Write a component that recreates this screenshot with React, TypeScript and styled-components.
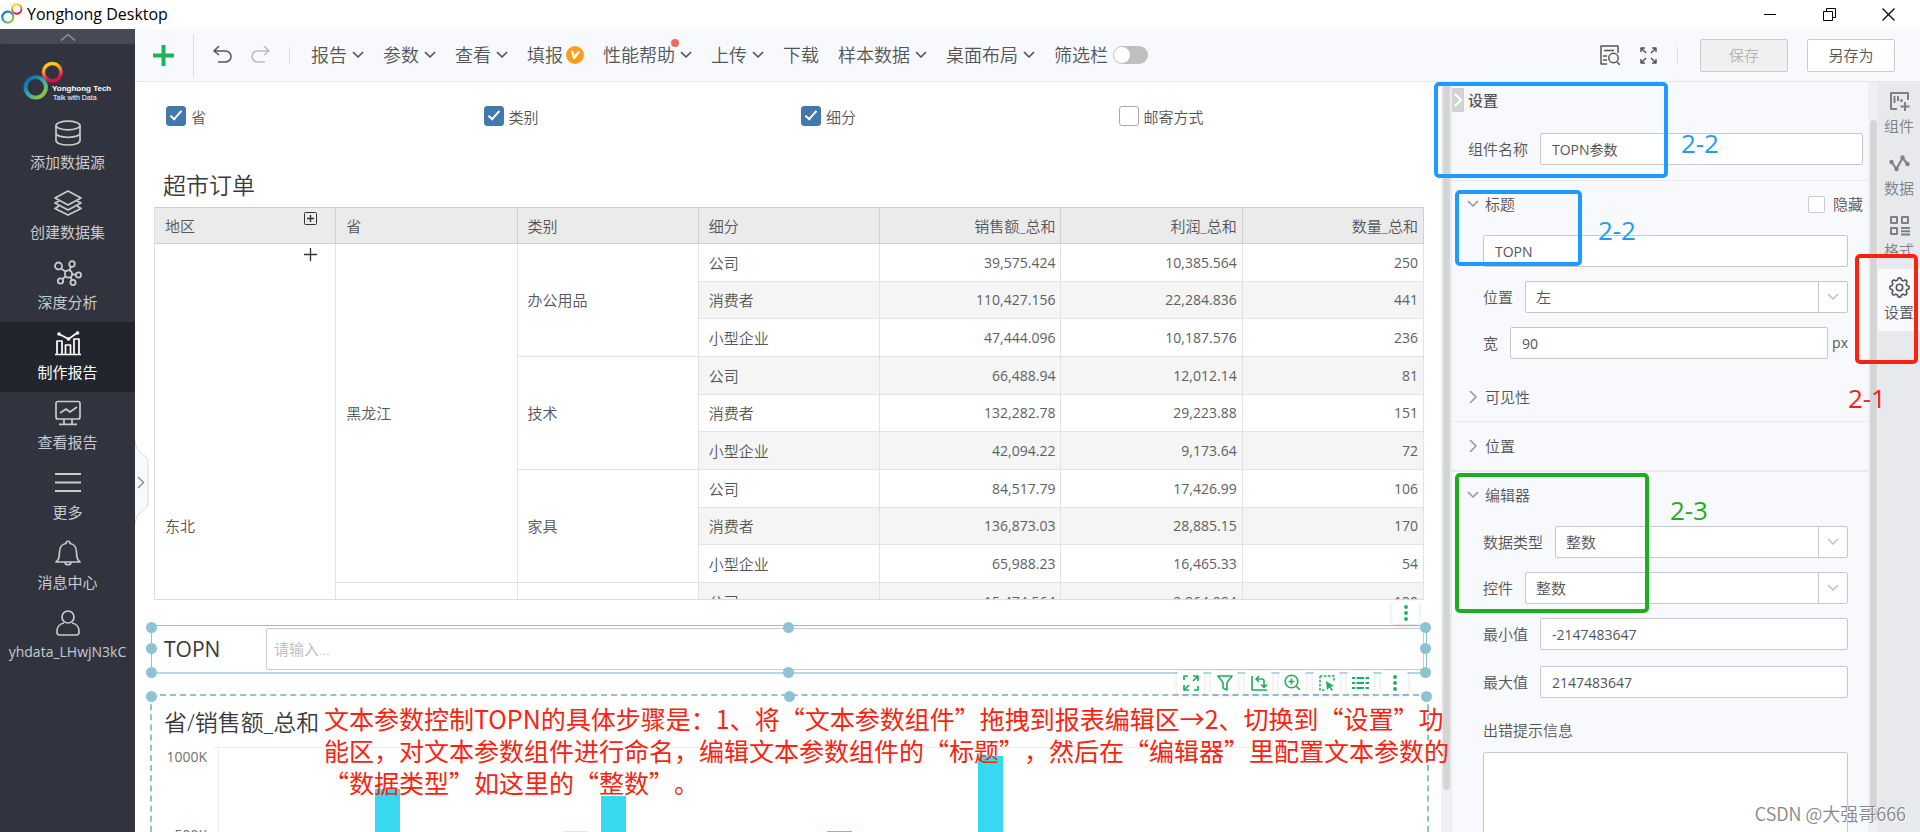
import React from "react";
import styled, { createGlobalStyle, css } from "styled-components";

const latin = `"Open Sans", "Noto Sans CJK SC", sans-serif`;
const cjk = `"Noto Sans CJK SC", sans-serif`;

const GlobalStyle = createGlobalStyle`
  *, *::before, *::after { box-sizing: border-box; }
  body { margin: 0; background: #fff; color: #555; font: 350 15px/20px ${latin}; }
  button, input, select, textarea { font: inherit; color: inherit; margin: 0; }
  button { padding: 0; border: 0; background: none; }
  svg { display: block; flex: none; }
`;

/* ---------- shell ---------- */

const Shell = styled.div`
  position: relative;
  display: flex;
  flex-direction: column;
  height: 100vh;
  overflow: hidden;
`;

const TitleBar = styled.header`
  display: flex;
  align-items: center;
  flex: none;
  height: 29px;
  padding: 0 25px 1px 1px;
  gap: 4px;
  color: #000;
  font-size: 16px;
  font-weight: 400;
`;

const AppName = styled.span`
  flex: 1;
`;

const WindowButtons = styled.div`
  display: flex;
  gap: 46px;
`;

const Body = styled.div`
  display: flex;
  flex: 1;
  min-height: 0;
`;

const Main = styled.div`
  display: flex;
  flex-direction: column;
  flex: 1;
  min-width: 0;
`;

/* ---------- sidebar ---------- */

const Sidebar = styled.nav`
  flex: none;
  width: 135px;
  background: #31343f;
  color: #c8cacd;
`;

const SidebarCollapse = styled.button`
  display: flex;
  align-items: center;
  justify-content: center;
  width: 100%;
  height: 15px;
  background: #474a55;
  border-radius: 0 0 3px 3px;
  color: #8d9098;
`;

const Brand = styled.div`
  display: flex;
  height: 68px;
  padding: 17px 0 0 23px;
  color: #fff;
`;

const BrandText = styled.div`
  margin: 23px 0 0 -12px;
  font: 700 8px/10px "Liberation Sans", Arial, sans-serif;
  white-space: nowrap;

  small {
    display: block;
    font: 400 7px/8px "Liberation Sans", Arial, sans-serif;
    padding-left: 1px;
  }
`;

const NavItem = styled.button<{ $active?: boolean }>`
  display: flex;
  flex-direction: column;
  align-items: center;
  width: 100%;
  height: 70px;
  padding-top: 8px;
  gap: 6px;
  font-size: 15px;
  font-weight: 400;
  ${(p) => p.$active && css`
    background: #22252e;
    color: #fff;
  `}
`;

const NavLabel = styled.span<{ $latin?: boolean }>`
  line-height: 20px;
  font-size: ${(p) => (p.$latin ? "14px" : "15px")};
`;

/* ---------- toolbar ---------- */

const Toolbar = styled.div`
  display: flex;
  align-items: center;
  flex: none;
  height: 53px;
  padding: 0 25px 0 18px;
  background: #f8f9fc;
  border-bottom: 1px solid #e4e7ee;
  color: #555;
`;

const ToolButton = styled.button<{ $gap?: number }>`
  position: relative;
  display: flex;
  align-items: center;
  margin-right: ${(p) => p.$gap ?? 19}px;
  gap: 5px;
  font-size: 18px;
  line-height: 24px;
  white-space: nowrap;
`;

const Rule = styled.span<{ $height: number; $gap: number }>`
  width: 1px;
  height: ${(p) => p.$height}px;
  margin-right: ${(p) => p.$gap}px;
  background: #d9dbe0;
`;

const Vip = styled.span`
  display: flex;
  align-items: center;
  justify-content: center;
  width: 18px;
  height: 18px;
  margin-left: -2px;
  border-radius: 50%;
  background: #fc9d1b;
  color: #fff;
`;

const NewDot = styled.i`
  position: absolute;
  top: -4px;
  right: 13px;
  width: 8px;
  height: 8px;
  border-radius: 50%;
  background: #f06a5c;
`;

const SwitchLabel = styled.label`
  display: flex;
  align-items: center;
  gap: 5px;
  font-size: 18px;
  line-height: 24px;
`;

const Switch = styled.input`
  appearance: none;
  width: 35px;
  height: 18px;
  border-radius: 9px;
  background: #bfbfbf;

  &::before {
    content: "";
    display: block;
    width: 16px;
    height: 16px;
    margin: 1px;
    border-radius: 50%;
    background: #fff;
  }
`;

const Spacer = styled.span`
  flex: 1;
`;

const FileButton = styled.button<{ $off?: boolean }>`
  width: 88px;
  height: 33px;
  border: 1px solid #ccc;
  border-radius: 2px;
  background: ${(p) => (p.$off ? "#f0f0f0" : "#fff")};
  color: ${(p) => (p.$off ? "#b5b5b5" : "#555")};
  & + & { margin-left: 19px; }
`;

/* ---------- report canvas ---------- */

const Workspace = styled.div`
  position: relative;
  display: flex;
  flex: 1;
  min-height: 0;
`;

const Canvas = styled.main`
  position: relative;
  display: flex;
  flex-direction: column;
  flex: 1;
  min-width: 0;
  padding: 24px 17px 0 19px;
`;

const DrawerHandle = styled.button`
  position: absolute;
  left: 0;
  top: 358px;
`;

const Filters = styled.div`
  display: grid;
  grid-template-columns: repeat(4, 1fr);
  padding-left: 12px;
  margin-right: -12px;
`;

const FilterLabel = styled.label`
  display: flex;
  gap: 5px;
  height: 20px;
  line-height: 23px;
`;

const FilterBox = styled.input`
  appearance: none;
  width: 20px;
  height: 20px;
  border: 1px solid #aaa;
  border-radius: 3px;
  background: #fff;

  &:checked {
    border-color: #4378ad;
    background: #4378ad;
  }
  &:checked::before {
    content: "";
    display: block;
    width: 6px;
    height: 12px;
    margin: 1px 0 0 6px;
    border: solid #fff;
    border-width: 0 2px 2px 0;
    transform: rotate(42deg);
  }
`;

const BlockTitle = styled.h2`
  margin: 0;
  color: #3a3a3a;
  font-size: 23px;
  font-weight: 350;
  line-height: 30px;
`;

const TableTitle = styled(BlockTitle)`
  padding: 44px 0 7px 9px;
`;

const TableScroll = styled.div`
  flex: none;
  height: 393px;
  overflow: hidden;
  border-bottom: 1px solid #ddd;
`;

const Grid = styled.table`
  width: 100%;
  table-layout: fixed;
  border-collapse: separate;
  border-spacing: 0;
  border: solid;
  border-width: 1px 0 0 1px;
  border-color: #d0d0d0 #ddd;

  tbody tr { height: 38px; }
  tbody tr:nth-child(3n + 2) { height: 37px; }
  tbody tr:nth-child(even) td:not([rowspan]) { background: #f5f5f5; }
  tbody tr:last-child { height: 188px; }
`;

const Th = styled.th<{ $num?: boolean }>`
  position: relative;
  height: 36px;
  padding: 0 5px 0 10px;
  border: 1px solid #d0d0d0;
  border-width: 0 1px 1px 0;
  background: #ebebeb;
  font-weight: 350;
  text-align: ${(p) => (p.$num ? "right" : "left")};
`;

const Td = styled.td<{ $num?: boolean }>`
  position: relative;
  padding: 0 5px 0 10px;
  border: 1px solid #e2e2e2;
  border-width: 0 1px 1px 0;
  ${(p) => p.$num && css`
    text-align: right;
    font-size: 14px;
    font-weight: 400;
    color: #606060;
  `}
`;

const ExpandButton = styled.button`
  position: absolute;
  top: 4px;
  right: 18px;
  color: #333;
`;

const ParamBlock = styled.section`
  position: relative;
  display: flex;
  align-items: center;
  flex: none;
  height: 49px;
  margin: 25px -3px 0;
  padding: 0 2px 1px 12px;
  border: 1px solid #8cc4d4;
  border-bottom: 2px solid #b5d8e2;
`;

const ParamLabel = styled.label`
  width: 102px;
  color: #3a3a3a;
  font-size: 21px;
  font-weight: 400;
  line-height: 30px;
`;

const ParamInput = styled.input`
  flex: 1;
  height: 42px;
  padding: 0 7px;
  border: 1px solid #ccc;
  border-radius: 2px;
  &::placeholder { color: #bbb; opacity: 1; }
`;

const Handle = styled.i<{ $x: string; $y: string }>`
  position: absolute;
  left: ${(p) => p.$x};
  top: ${(p) => p.$y};
  width: 11px;
  height: 11px;
  margin: -5px -6px;
  border-radius: 50%;
  background: #8cc4d4;
`;

const FloatingTools = styled.div<{ $right: number; $top: number }>`
  position: absolute;
  z-index: 1;
  top: ${(p) => p.$top}px;
  right: ${(p) => p.$right}px;
  display: flex;
  gap: 7px;
`;

const FloatButton = styled.button`
  display: flex;
  align-items: center;
  justify-content: center;
  width: 27px;
  height: 23px;
  border-radius: 4px;
  background: #fff;
  box-shadow: 0 1px 4px rgba(0, 0, 0, 0.14);
  color: #1fae5e;
`;

const ChartBlock = styled.section`
  position: relative;
  flex: 1;
  min-height: 0;
  margin: 20px -5px 0 -4px;
  padding: 11px 0 0 12px;
  border: 2px dashed #8cc4d4;
  border-bottom: 0;
`;

const Plot = styled.div`
  display: flex;
  margin-top: 10px;
`;

const AxisLabels = styled.div`
  display: flex;
  flex-direction: column;
  gap: 58px;
  width: 43px;
  font-size: 14px;
  font-weight: 400;
  color: #707070;
  text-align: right;
`;

const Bars = styled.svg`
  flex: 1;
  min-width: 0;
  height: 140px;
  margin: 0 2px 0 7px;
`;

const ScrollTrack = styled.div<{ $from: number; $bottom: number }>`
  flex: none;
  width: 10px;
  padding: ${(p) => p.$from}px 1px ${(p) => p.$bottom}px 2px;
  background: #eff0f4;

  &::before {
    content: "";
    display: block;
    height: 100%;
    border-radius: 4px;
    background: #d5d5d5;
  }
`;

/* ---------- settings panel ---------- */

const Panel = styled.aside`
  position: relative;
  flex: none;
  width: 417px;
  overflow: hidden;
  border-left: 1px solid #e4e7ee;
  background: #f8f9fc;
`;

const PanelCollapse = styled.button`
  position: absolute;
  left: 0;
  top: 6px;
  display: flex;
  align-items: center;
  justify-content: center;
  width: 12px;
  height: 24px;
  background: #d2d2d2;
  color: #fff;
`;

const PanelTitle = styled.h2`
  margin: 0;
  padding-left: 16px;
  font-size: 15px;
  font-weight: 500;
  line-height: 36px;
`;

const Field = styled.div`
  display: flex;
  align-items: center;
  height: 32px;
  gap: 12px;
`;

const NameField = styled(Field)`
  margin: 15px 5px 15px 16px;
`;

const Section = styled.section<{ $line?: number; $pad?: boolean }>`
  border-top: ${(p) => p.$line ?? 1}px solid #e6e9f2;
  padding-bottom: ${(p) => (p.$pad ? 14 : 0)}px;
`;

const SectionHead = styled.div<{ $open?: boolean }>`
  display: flex;
  align-items: center;
  justify-content: space-between;
  height: ${(p) => (p.$open ? 46 : 48)}px;
  padding: 0 5px 0 15px;
`;

const SectionToggle = styled.button`
  display: flex;
  align-items: center;
  gap: 6px;
  svg { color: #999; }
`;

const HideLabel = styled.label`
  display: flex;
  align-items: center;
  gap: 8px;
`;

const HideBox = styled.input`
  appearance: none;
  width: 17px;
  height: 17px;
  border: 1px solid #ccc;
  border-radius: 2px;
  background: #fff;
`;

const Fields = styled.div<{ $gap: number; $top: number }>`
  display: flex;
  flex-direction: column;
  gap: ${(p) => p.$gap}px;
  padding: ${(p) => p.$top}px 20px 0 31px;
`;

const TextInput = styled.input`
  flex: 1;
  min-width: 0;
  height: 32px;
  padding: 0 11px;
  border: 1px solid #c8c8c8;
  border-radius: 2px;
  background: #fff;
  font-size: 14px;
  font-weight: 400;
`;

const SelectWrap = styled.span`
  display: flex;
  flex: 1;
  height: 32px;
  border: 1px solid #c8c8c8;
  border-radius: 2px;
  background: #fff;
`;

const Select = styled.select`
  appearance: none;
  flex: 1;
  padding: 0 10px;
  border: 0;
  background: none;
`;

const SelectArrow = styled.span`
  display: flex;
  align-items: center;
  justify-content: center;
  width: 29px;
  border-left: 1px solid #c8c8c8;
  color: #c4c4c4;
`;

const Unit = styled.span`
  margin-left: -8px;
  font-size: 14px;
  font-weight: 400;
`;

const ErrorField = styled.div`
  display: flex;
  flex-direction: column;
  gap: 6px;
  label { line-height: 32px; }
`;

const ErrorText = styled.textarea`
  height: 120px;
  border: 1px solid #c8c8c8;
  border-radius: 2px;
  background: #fff;
  resize: none;
`;

const Tabs = styled.div`
  flex: none;
  width: 42px;
  padding-top: 1px;
  background: #e7e9ec;
`;

const Tab = styled.button<{ $active?: boolean }>`
  display: flex;
  flex-direction: column;
  align-items: center;
  width: 100%;
  height: 62px;
  padding-top: 8px;
  gap: 4px;
  color: ${(p) => (p.$active ? "#555" : "#808080")};
  background: ${(p) => (p.$active ? "#f8f9fc" : "none")};
`;

/* ---------- annotations ---------- */

const Frame = styled.div<{ $right: number; $top: number; $w: number; $h: number; $color: string }>`
  position: absolute;
  right: ${(p) => p.$right}px;
  top: ${(p) => p.$top}px;
  width: ${(p) => p.$w}px;
  height: ${(p) => p.$h}px;
  border: 4px solid ${(p) => p.$color};
  border-radius: 5px;
  pointer-events: none;
`;

const StepMark = styled.span<{ $right: number; $top: number; $color: string }>`
  position: absolute;
  right: ${(p) => p.$right}px;
  top: ${(p) => p.$top}px;
  color: ${(p) => p.$color};
  font-size: 26px;
  font-weight: 400;
  line-height: 32px;
`;

const Note = styled.p`
  position: absolute;
  left: 189px;
  top: 620px;
  margin: 0;
  color: #fb2310;
  font-family: ${cjk};
  font-size: 25px;
  font-weight: 400;
  line-height: 32px;
  white-space: nowrap;
  text-spacing-trim: space-all;
`;

const Watermark = styled.span`
  position: absolute;
  right: 14px;
  bottom: 6px;
  color: #85878b;
  font-family: ${cjk};
  font-size: 18px;
  font-weight: 350;
  line-height: 26px;
  text-shadow: 1px 1px 0 #fff;
`;

/* ---------- icons ---------- */

type IconProps = { w?: number; h?: number; sw?: number; box?: string; children: React.ReactNode };
const Icon = ({ w = 26, h, sw = 2, box, children }: IconProps) => (
  <svg width={w} height={h ?? w} viewBox={box ?? `0 0 ${w} ${h ?? w}`} fill="none" stroke="currentColor"
    strokeWidth={sw} strokeLinejoin="round" aria-hidden="true">{children}</svg>
);

const ChevronDown = ({ sw = 1.7 }: { sw?: number }) => (
  <Icon w={12} h={8} sw={sw}><path d="M1 1l5 5 5-5" /></Icon>
);
const ChevronRight = () => (
  <Icon w={12} h={12} sw={1}><path d="M3 0l6 6-6 6" strokeWidth="1.6" /></Icon>
);

// Outline of an eight-lobed cog round the centre of a 21px box.
const cogPath = "M" + Array.from({ length: 96 }, (_, i) => {
  const a = (i / 96) * Math.PI * 2;
  const r = 8.6 + 1.1 * Math.tanh(2 * Math.cos(8 * a));
  return `${(10.5 + r * Math.sin(a)).toFixed(2)} ${(10.5 - r * Math.cos(a)).toFixed(2)}`;
}).join("L") + "Z";

const Rings = ({ size, id }: { size: number; id: string }) => (
  <svg width={size} height={size} viewBox="0 0 42 42" fill="none" aria-hidden="true">
    <defs>
      <linearGradient id={`${id}a`} x1="0" y1="0" x2="0.9" y2="1">
        <stop offset="0.1" stopColor="#1169a8" />
        <stop offset="0.5" stopColor="#2aa9b8" />
        <stop offset="0.9" stopColor="#8cc63f" />
      </linearGradient>
      <linearGradient id={`${id}b`} x1="0.2" y1="0" x2="0.5" y2="1">
        <stop offset="0.15" stopColor="#fcc81a" />
        <stop offset="0.5" stopColor="#f47a32" />
        <stop offset="0.9" stopColor="#e5094c" />
      </linearGradient>
    </defs>
    <circle cx="30" cy="11.500" r="9" stroke={`url(#${id}b)`} strokeWidth="3.600" />
    <circle cx="13" cy="27" r="10.500" stroke={`url(#${id}a)`} strokeWidth="4" />
  </svg>
);

const DatabaseIcon = () => (
  <Icon sw={1.7}><ellipse cx="13" cy="5.500" rx="12" ry="4.300" /><path d="M1 5.500v15c0 2.500 5 4.500 12 4.500s12-2 12-4.500v-15M1 13c0 2.500 5 4.300 12 4.300s12-1.800 12-4.300" /></Icon>
);
const LayersIcon = () => (
  <Icon w={28} h={26} sw={1.7}><path d="M14 1l13 7-13 7L1 8zM5 11l-4 2 13 7 13-7-4-2M5 16l-4 2.500L14 25l13-6.500L23 16" /></Icon>
);
const NetworkIcon = () => (
  <Icon w={28} h={26} sw={1.8}><circle cx="14.500" cy="14" r="3.600" /><circle cx="4.500" cy="6" r="3.500" /><circle cx="18" cy="4" r="2.800" /><circle cx="24.500" cy="15" r="2.600" /><circle cx="6.500" cy="21" r="2.700" /><circle cx="19" cy="22.500" r="2.600" /><path d="M7 8.500l4.500 3M15.500 10.500l1.500-4M18 14.500h4M11.500 16.500L8.500 19M16.500 17l1.500 3" /></Icon>
);
const ReportIcon = () => (
  <Icon sw={1.7}><path d="M2 24V11h5v13M10.500 24V15h5v9M19 24V9h5v15M0 24.500h26M4 4l9.500 5L22 3" /><g fill="currentColor" stroke="none"><circle cx="4" cy="4" r="1.800" /><circle cx="13.500" cy="9" r="1.800" /><circle cx="22.500" cy="3" r="1.800" /></g></Icon>
);
const MonitorIcon = () => (
  <Icon sw={1.7}><rect x="1" y="1.500" width="24" height="17.500" rx="2" /><path d="M5 13l6-4 4 3 7-5M9 19v5M17 19v5M4 24.300h18" /></Icon>
);
const MenuIcon = () => <Icon sw={1.8}><path d="M0 4h26M0 12.500h26M0 21h26" /></Icon>;
const BellIcon = () => (
  <Icon sw={1.7}><path d="M1 22c3-2 3.500-5 3.500-10 0-5 3-8 6.500-8.500 0-3 4-3 4 0 3.500.5 6.500 3.500 6.500 8.500 0 5 .5 8 3.500 10zM10 22.500c.5 3 5.500 3 6 0" /></Icon>
);
const UserIcon = () => (
  <Icon sw={1.7}><circle cx="13" cy="7" r="6" /><path d="M9 13c-5 1-7.500 5-7 9.500.2 1.800 1 2.500 2.500 2.500h17c1.500 0 2.300-.7 2.500-2.500.5-4.500-2-8.500-7-9.500" /></Icon>
);

const dots = (
  <Icon w={20} h={18}><g fill="currentColor" stroke="none"><circle cx="10" cy="3" r="1.900" /><circle cx="10" cy="9" r="1.900" /><circle cx="10" cy="15" r="1.900" /></g></Icon>
);

const chartTools: [string, React.ReactNode][] = [
  ["放大", <Icon w={16} sw={1.7}><path d="M1 5V1h4M10 1h5v5M15 11v4h-4M6 15H1v-5M10 6l5-5M6 10l-5 5" /></Icon>],
  ["过滤", <Icon w={16} sw={1.6}><path d="M1 1h14l-5 6.500V15l-4-2V7.500z" /></Icon>],
  ["行列转换", <Icon w={18} h={16} sw={1.6}><path d="M2 1v14h15M6 4h6q2 0 2 2v6M9 1L6 4l3 3M11 9.500l3 3 3-3" /></Icon>],
  ["缩放", <Icon w={17} sw={1.6}><circle cx="7.500" cy="7.500" r="6.300" /><path d="M12 12l4 4M4.500 7.500h6M7.500 4.500v6" /></Icon>],
  ["选择", <Icon w={16} sw={1.5}><path d="M1 1h14v6M1 1v14h6" strokeDasharray="2.500 1.500" /><path d="M7 6l8 5-3.500.7L14 15l-1.500 1-2-3.500L8 15z" fill="currentColor" stroke="none" /></Icon>],
  ["图例", <Icon w={17} h={14} sw={2}><path d="M0 2h3M4.500 2h7.500M13.500 2h3.500M0 7h3M4.500 7h7.500M13.500 7h3.500M0 12h3M4.500 12h7.500M13.500 12h3.500" /></Icon>],
  ["更多操作", dots],
];

/* ---------- data ---------- */

const navItems: [string, React.ReactNode][] = [
  ["添加数据源", <DatabaseIcon />], ["创建数据集", <LayersIcon />], ["深度分析", <NetworkIcon />],
  ["制作报告", <ReportIcon />], ["查看报告", <MonitorIcon />], ["更多", <MenuIcon />],
  ["消息中心", <BellIcon />], ["yhdata_LHwjN3kC", <UserIcon />],
];

const rows = [
  ["公司", "39,575.424", "10,385.564", "250"],
  ["消费者", "110,427.156", "22,284.836", "441"],
  ["小型企业", "47,444.096", "10,187.576", "236"],
  ["公司", "66,488.94", "12,012.14", "81"],
  ["消费者", "132,282.78", "29,223.88", "151"],
  ["小型企业", "42,094.22", "9,173.64", "72"],
  ["公司", "84,517.79", "17,426.99", "106"],
  ["消费者", "136,873.03", "28,885.15", "170"],
  ["小型企业", "65,988.23", "16,465.33", "54"],
  ["公司", "15,474.564", "2,864.984", "130"],
];
const categories = ["办公用品", "技术", "家具", ""];

const bars = [
  { x: 161, y: 42, faint: false }, { x: 349, y: 84, faint: true }, { x: 387, y: 49, faint: false },
  { x: 613, y: 84, faint: false }, { x: 764, y: 9, faint: false },
];

const blue = "#1e9bff";
const red = "#ff2010";
const green = "#1cae1c";

/* ---------- parts ---------- */

const MenuButton = ({ children, dot }: { children: string; dot?: boolean }) => (
  <ToolButton>{children}{dot && <NewDot />}<ChevronDown /></ToolButton>
);

const SelectField = ({ id, label, value }: { id: string; label: string; value: string }) => (
  <Field>
    <label htmlFor={id}>{label}</label>
    <SelectWrap>
      <Select id={id} defaultValue={value}><option>{value}</option></Select>
      <SelectArrow><ChevronDown /></SelectArrow>
    </SelectWrap>
  </Field>
);

const InputField = ({ id, label, value, unit }: { id: string; label: string; value: string; unit?: string }) => (
  <Field>
    <label htmlFor={id}>{label}</label>
    <TextInput id={id} defaultValue={value} />
    {unit && <Unit>{unit}</Unit>}
  </Field>
);

const OrdersTable = () => (
  <TableScroll>
    <Grid>
      <thead>
        <tr>
          <Th>地区
            <ExpandButton aria-label="展开全部">
              <Icon w={13} sw={1}><rect x="0.500" y="0.500" width="12" height="12" rx="1" /><path d="M3 6.500h7M6.500 3v7" strokeWidth="1.400" /></Icon>
            </ExpandButton>
          </Th>
          <Th>省</Th><Th>类别</Th><Th>细分</Th>
          <Th $num>销售额_总和</Th><Th $num>利润_总和</Th><Th $num>数量_总和</Th>
        </tr>
      </thead>
      <tbody>
        {rows.map(([kind, ...nums], i) => (
          <tr key={i}>
            {i === 0 && (
              <Td rowSpan={11}>东北
                <ExpandButton aria-label="展开东北">
                  <Icon w={13} sw={1}><path d="M0 6.500h13M6.500 0v13" strokeWidth="1.300" /></Icon>
                </ExpandButton>
              </Td>
            )}
            {i % 9 === 0 && <Td rowSpan={i === 0 ? 9 : 2}>{i === 0 ? "黑龙江" : ""}</Td>}
            {i % 3 === 0 && <Td rowSpan={i < 9 ? 3 : 2}>{categories[i / 3]}</Td>}
            <Td>{kind}</Td>
            {nums.map((n, c) => <Td key={c} $num>{n}</Td>)}
          </tr>
        ))}
        <tr><Td colSpan={4} /></tr>
      </tbody>
    </Grid>
  </TableScroll>
);

export default function App() {
  return (
    <Shell>
      <GlobalStyle />
      <TitleBar>
        <Rings size={22} id="t" />
        <AppName>Yonghong Desktop</AppName>
        <WindowButtons>
          <button aria-label="最小化"><Icon w={13} sw={1}><path d="M0 6.500h12" stroke="#000" /></Icon></button>
          <button aria-label="还原"><Icon w={13} sw={1}><path d="M.5 3.500h9v9h-9zM3.500 3.500v-3h9v9h-3" stroke="#000" /></Icon></button>
          <button aria-label="关闭"><Icon w={13} sw={1}><path d="M.5.5l12 12M12.500.5l-12 12" stroke="#000" strokeWidth="1.200" /></Icon></button>
        </WindowButtons>
      </TitleBar>
      <Body>
        <Sidebar>
          <SidebarCollapse aria-label="收起"><Icon w={16} h={8} sw={1.6}><path d="M1 7.500l7-6 7 6" /></Icon></SidebarCollapse>
          <Brand>
            <Rings size={41} id="b" />
            <BrandText>Yonghong Tech<small>Talk with Data</small></BrandText>
          </Brand>
          {navItems.map(([label, icon], i) => (
            <NavItem key={label} $active={i === 3}>{icon}<NavLabel $latin={i === 7}>{label}</NavLabel></NavItem>
          ))}
        </Sidebar>
        <Main>
          <Toolbar>
            <ToolButton aria-label="新建"><Icon w={21} sw={4}><path d="M0 10.500h21M10.500 0v21" stroke="#1fb25c" /></Icon></ToolButton>
            <Rule $height={43} $gap={19} />
            <ToolButton aria-label="撤销"><Icon w={19} h={18} sw={1.5}><path d="M1 5h11.500a5.500 5.500 0 010 11H5M6 0L1 5l5 4" /></Icon></ToolButton>
            <ToolButton aria-label="重做"><Icon w={19} h={18} sw={1.5}><path d="M18 5H6.500a5.500 5.500 0 000 11H14M13 0l5 5-5 4" stroke="#bbb" /></Icon></ToolButton>
            <Rule $height={17} $gap={21} />
            <MenuButton>报告</MenuButton>
            <MenuButton>参数</MenuButton>
            <MenuButton>查看</MenuButton>
            <ToolButton>填报<Vip><Icon w={10} h={10} sw={2.4}><path d="M1.500 2h1l1.500 6L9 1.500" /></Icon></Vip></ToolButton>
            <MenuButton dot>性能帮助</MenuButton>
            <MenuButton>上传</MenuButton>
            <ToolButton>下载</ToolButton>
            <MenuButton>样本数据</MenuButton>
            <MenuButton>桌面布局</MenuButton>
            <SwitchLabel>筛选栏<Switch type="checkbox" role="switch" /></SwitchLabel>
            <Spacer />
            <ToolButton $gap={20} aria-label="查找"><Icon w={20} sw={1.5}><path d="M7 19H1V1h17v7M4 5.500h10M3 11h4M3 15h4M17 17l3 3" /><circle cx="13.500" cy="13" r="4.700" /></Icon></ToolButton>
            <ToolButton $gap={20} aria-label="全屏"><Icon w={17} sw={1.5}><path d="M1 5V1h4M12 1h4v4M16 12v4h-4M5 16H1v-4M1 1l5 5M16 1l-5 5M16 16l-5-5M1 16l5-5" /></Icon></ToolButton>
            <Rule $height={17} $gap={22} />
            <FileButton $off>保存</FileButton>
            <FileButton>另存为</FileButton>
          </Toolbar>
          <Workspace>
            <Canvas>
              <DrawerHandle aria-label="展开">
                <svg width="14" height="84" viewBox="0 0 14 84" fill="none">
                  <path d="M0 0c0 14 13 14 13 22v42c0 6-13 8-13 20" fill="#f8f9fc" stroke="#d5d9e0" />
                  <path d="M3 37l5.500 5.500L3 48" stroke="#888" strokeWidth="1.400" />
                </svg>
              </DrawerHandle>
              <Filters>
                {["省", "类别", "细分", "邮寄方式"].map((f, i) => (
                  <FilterLabel key={f}><FilterBox type="checkbox" defaultChecked={i < 3} />{f}</FilterLabel>
                ))}
              </Filters>
              <TableTitle>超市订单</TableTitle>
              <OrdersTable />
              <ParamBlock>
                <ParamLabel htmlFor="topn">TOPN</ParamLabel>
                <ParamInput id="topn" placeholder="请输入..." />
                {["0%", "50%", "100%"].map((x) => ["1px", "48%", "100%"].map((y) =>
                  x === "50%" && y === "48%" ? null : <Handle key={x + y} $x={x} $y={y} />
                ))}
                <FloatingTools $right={7} $top={-25}><FloatButton aria-label="更多">{dots}</FloatButton></FloatingTools>
              </ParamBlock>
              <ChartBlock>
                {["0%", "50%", "100%"].map((x) => <Handle key={x} $x={x} $y="0" />)}
                <FloatingTools $right={19} $top={-25}>
                  {chartTools.map(([name, icon]) => <FloatButton key={name} aria-label={name}>{icon}</FloatButton>)}
                </FloatingTools>
                <BlockTitle>省/销售额_总和</BlockTitle>
                <Plot>
                  <AxisLabels><span>1000K</span><span>500K</span></AxisLabels>
                  <Bars>
                    <path d="M0 .5h1208M4.500 0v140" stroke="#ececec" />
                    {bars.map((b) => (
                      <rect key={b.x} x={b.x} y={b.y} width="25" height={140 - b.y} fill={b.faint ? "#c9f3f6" : "#38d9f0"} />
                    ))}
                  </Bars>
                </Plot>
              </ChartBlock>
            </Canvas>
            <ScrollTrack $from={0} $bottom={42} />
            <Panel>
              <PanelCollapse aria-label="收起面板"><Icon w={9} h={14}><path d="M1 1l6 6-6 6" /></Icon></PanelCollapse>
              <PanelTitle>设置</PanelTitle>
              <NameField>
                <label htmlFor="name">组件名称</label>
                <TextInput id="name" defaultValue="TOPN参数" />
              </NameField>
              <Section $pad>
                <SectionHead $open>
                  <SectionToggle><ChevronDown />标题</SectionToggle>
                  <HideLabel><HideBox type="checkbox" />隐藏</HideLabel>
                </SectionHead>
                <Fields $gap={14} $top={8}>
                  <Field><TextInput aria-label="标题" defaultValue="TOPN" /></Field>
                  <SelectField id="pos" label="位置" value="左" />
                  <InputField id="width" label="宽" value="90" unit="px" />
                </Fields>
              </Section>
              <SectionHead><SectionToggle><ChevronRight />可见性</SectionToggle></SectionHead>
              <Section><SectionHead><SectionToggle><ChevronRight />位置</SectionToggle></SectionHead></Section>
              <Section $line={2}>
                <SectionHead $open><SectionToggle><ChevronDown />编辑器</SectionToggle></SectionHead>
                <Fields $gap={14} $top={8}>
                  <SelectField id="type" label="数据类型" value="整数" />
                  <SelectField id="ctrl" label="控件" value="整数" />
                </Fields>
                <Fields $gap={16} $top={14}>
                  <InputField id="min" label="最小值" value="-2147483647" />
                  <InputField id="max" label="最大值" value="2147483647" />
                  <ErrorField>
                    <label htmlFor="err">出错提示信息</label>
                    <ErrorText id="err" />
                  </ErrorField>
                </Fields>
              </Section>
            </Panel>
            <ScrollTrack $from={38} $bottom={11} />
            <Tabs>
              <Tab><Icon w={21} sw={2}><path d="M8 18H2V2h17v7M5.500 5v7M9 5v5M12.500 8v3M16 11v9M11.500 15.500h9" /></Icon>组件</Tab>
              <Tab><Icon w={21} sw={2}><path d="M2.500 9l5 7 6-11 5 6" /><g fill="currentColor" stroke="none"><circle cx="2.500" cy="9" r="2.200" /><circle cx="7.500" cy="16" r="2.200" /><circle cx="13.500" cy="4.500" r="2.200" /><circle cx="18.500" cy="11" r="2.200" /></g></Icon>数据</Tab>
              <Tab><Icon w={21} sw={2}><path d="M2 2h6v6H2zM13 2h6v6h-6zM2 13h6v6H2zM12 13h9M12 16.300h9M12 19.500h9" /></Icon>格式</Tab>
              <Tab $active>
                <Icon w={21} sw={1.6}><path d={cogPath} /><circle cx="10.500" cy="10.500" r="3.200" /></Icon>设置
              </Tab>
            </Tabs>

            <Note>
              文本参数控制TOPN的具体步骤是：1、将“文本参数组件”拖拽到报表编辑区→2、切换到“设置”功<br />
              能区，对文本参数组件进行命名，编辑文本参数组件的“标题”，然后在“编辑器”里配置文本参数的<br />
              “数据类型”如这里的“整数”。
            </Note>
            <Frame $right={252} $top={0} $w={234} $h={96} $color={blue} />
            <Frame $right={338} $top={108} $w={127} $h={76} $color={blue} />
            <Frame $right={2} $top={172} $w={63} $h={110} $color={red} />
            <Frame $right={271} $top={391} $w={194} $h={140} $color={green} />
            <StepMark $right={201} $top={45} $color={blue}>2-2</StepMark>
            <StepMark $right={284} $top={132} $color={blue}>2-2</StepMark>
            <StepMark $right={34} $top={300} $color={red}>2-1</StepMark>
            <StepMark $right={212} $top={412} $color={green}>2-3</StepMark>
            <Watermark>CSDN @大强哥666</Watermark>
          </Workspace>
        </Main>
      </Body>
    </Shell>
  );
}
